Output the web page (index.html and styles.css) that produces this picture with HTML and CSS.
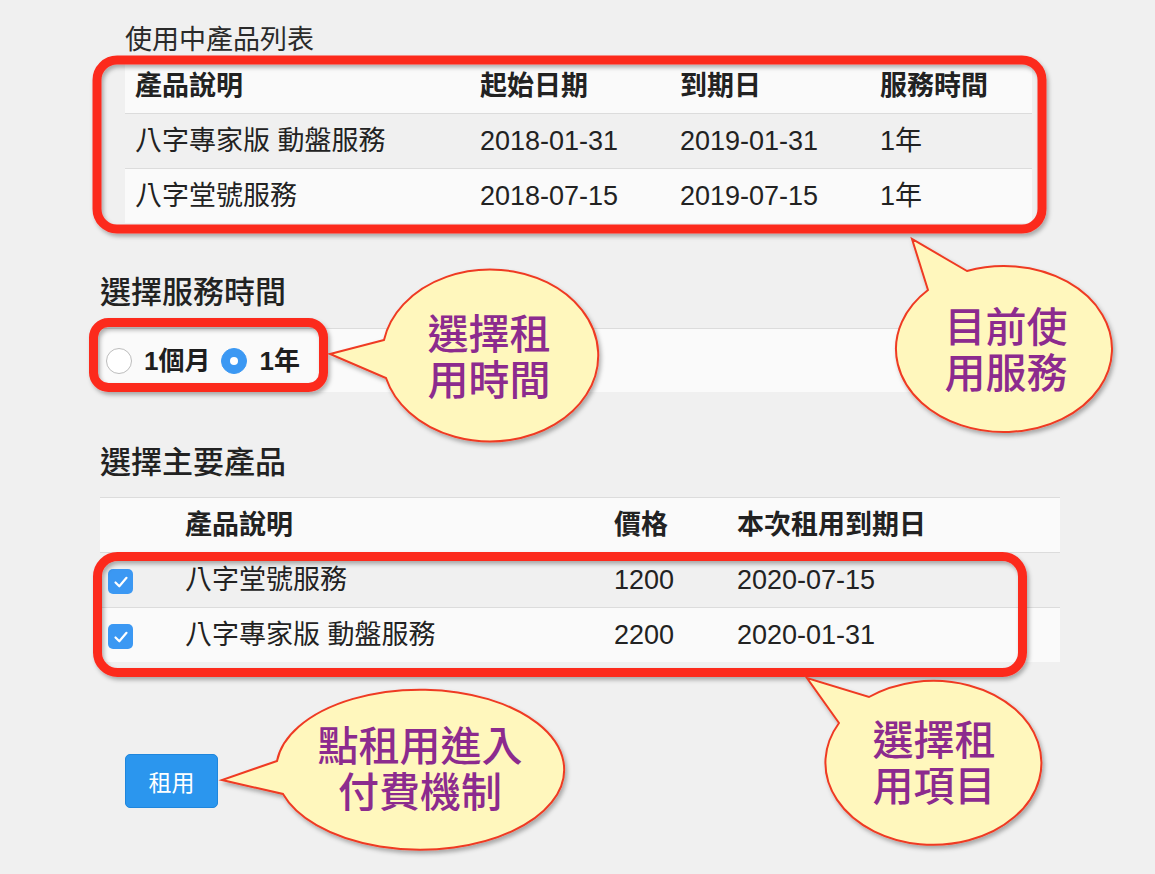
FILE: index.html
```html
<!DOCTYPE html>
<html lang="zh-Hant">
<head>
<meta charset="utf-8">
<title>使用中產品列表</title>
<link rel="stylesheet" href="styles.css">
</head>
<body>
<div class="page">
  <div class="content">
    <section class="current">
      <h2 class="title">使用中產品列表</h2>
      <table class="grid grid-current">
        <colgroup>
          <col class="c-desc"><col class="c-date"><col class="c-date"><col class="c-len">
        </colgroup>
        <thead>
          <tr><th>產品說明</th><th>起始日期</th><th>到期日</th><th>服務時間</th></tr>
        </thead>
        <tbody>
          <tr class="odd"><td>八字專家版 動盤服務</td><td>2018-01-31</td><td>2019-01-31</td><td>1年</td></tr>
          <tr class="even"><td>八字堂號服務</td><td>2018-07-15</td><td>2019-07-15</td><td>1年</td></tr>
        </tbody>
      </table>
    </section>

    <h3 class="heading heading-period">選擇服務時間</h3>
    <div class="period">
      <span class="radio"></span><span class="radio-label">1個月</span>
      <span class="radio checked"></span><span class="radio-label">1年</span>
    </div>

    <h3 class="heading heading-products">選擇主要產品</h3>
    <table class="grid grid-products">
      <colgroup>
        <col class="p-check"><col class="p-desc"><col class="p-price"><col class="p-date">
      </colgroup>
      <thead>
        <tr><th></th><th>產品說明</th><th>價格</th><th>本次租用到期日</th></tr>
      </thead>
      <tbody>
        <tr class="odd">
          <td class="check-cell"><span class="checkbox"><svg viewBox="0 0 24 24" width="24" height="24"><path d="M6.5 12.5 L10.3 16.3 L17.5 7.8" fill="none" stroke="#fff" stroke-width="2.2" stroke-linecap="round" stroke-linejoin="round"/></svg></span></td>
          <td>八字堂號服務</td><td>1200</td><td>2020-07-15</td>
        </tr>
        <tr class="even">
          <td class="check-cell"><span class="checkbox"><svg viewBox="0 0 24 24" width="24" height="24"><path d="M6.5 12.5 L10.3 16.3 L17.5 7.8" fill="none" stroke="#fff" stroke-width="2.2" stroke-linecap="round" stroke-linejoin="round"/></svg></span></td>
          <td>八字專家版 動盤服務</td><td>2200</td><td>2020-01-31</td>
        </tr>
      </tbody>
    </table>

    <button class="rent-btn" type="button">租用</button>
  </div>

  <svg class="annotations" width="1155" height="874" viewBox="0 0 1155 874">
    <defs>
      <filter id="shadow" x="-10%" y="-10%" width="120%" height="130%">
        <feDropShadow dx="2" dy="3" stdDeviation="2.2" flood-color="#000" flood-opacity="0.3"/>
      </filter>
    </defs>
    <g class="frames" filter="url(#shadow)">
      <rect x="97" y="60" width="945" height="169" rx="20" ry="20"/>
      <rect x="93.5" y="322.5" width="230" height="65" rx="15" ry="15"/>
      <rect x="97.5" y="556.5" width="925" height="116" rx="20" ry="20"/>
    </g>
    <g class="bubbles" filter="url(#shadow)">
      <path d="M 928 290 L 912 239 L 967 271 A 108 83 0 1 1 928 290 Z"/>
      <path d="M 384 340 L 330 354 L 386 378 A 108 86 0 1 0 384 340 Z"/>
      <path d="M 839 723 L 807 678 L 869 697 A 108 82 0 1 1 839 723 Z"/>
      <path d="M 277 761 L 222 780 L 283 794 A 144 80 0 1 0 277 761 Z"/>
    </g>
  </svg>

  <div class="callout callout-current">目前使<br>用服務</div>
  <div class="callout callout-period">選擇租<br>用時間</div>
  <div class="callout callout-items">選擇租<br>用項目</div>
  <div class="callout callout-pay">點租用進入<br>付費機制</div>
</div>
</body>
</html>
```

FILE: styles.css
```css
html, body {
  margin: 0;
  padding: 0;
}

body {
  background: #f0f0f0;
  font-family: "Liberation Sans", "Noto Sans CJK TC", sans-serif;
  color: #222;
}

.page {
  position: relative;
  width: 1155px;
  height: 874px;
  overflow: hidden;
}

.content {
  padding: 24px 0 0 100px;
  width: 960px;
}

.current {
  padding-left: 25px;
}

.title {
  margin: 0;
  font-size: 27px;
  line-height: 32px;
  font-weight: 400;
  color: #2a2a2a;
}

.grid {
  border-collapse: collapse;
  table-layout: fixed;
  font-size: 27px;
}

.grid th,
.grid td {
  padding: 11px 10px;
  line-height: 32px;
  border-top: 1px solid #dcdcdc;
  text-align: left;
  white-space: nowrap;
  vertical-align: middle;
}

.grid th {
  font-weight: 700;
}

.grid thead tr {
  background: #fafafa;
}

.grid tr.odd {
  background: #f0f0f0;
}

.grid tr.even {
  background: #fafafa;
}

.grid-current {
  margin-top: 2px;
  width: 907px;
}

.c-desc { width: 345px; }
.c-date { width: 200px; }
.c-len { width: 162px; }

.heading {
  margin: 0;
  font-size: 31px;
  line-height: 36px;
  font-weight: 500;
  color: #222;
}

.heading-period {
  margin-top: 52px;
}

.period {
  margin-top: 17px;
  height: 63px;
  border-top: 1px solid #dcdcdc;
  background: #fafafa;
  display: flex;
  align-items: center;
  padding-left: 6px;
}

.radio {
  width: 24px;
  height: 24px;
  border-radius: 50%;
  border: 1px solid #bdbdbd;
  background: #fff;
  box-sizing: content-box;
  position: relative;
  flex: none;
}

.radio.checked {
  border-color: #3b98f3;
  background: #3b98f3;
}

.radio.checked::after {
  content: "";
  position: absolute;
  left: 8px;
  top: 8px;
  width: 8px;
  height: 8px;
  border-radius: 50%;
  background: #fff;
}

.radio-label {
  font-size: 26px;
  font-weight: 700;
  line-height: 32px;
  margin: 0 11px 0 12px;
  color: #1e1e1e;
}

.heading-products {
  margin-top: 53px;
}

.grid-products {
  margin-top: 16px;
  width: 960px;
}

.p-check { width: 75px; }
.p-desc { width: 429px; }
.p-price { width: 123px; }
.p-date { width: 333px; }

.grid td.check-cell {
  padding-left: 8px;
  padding-right: 0;
}

.checkbox {
  display: inline-flex;
  width: 25px;
  height: 25px;
  border-radius: 5px;
  background: #3b98f3;
  align-items: center;
  justify-content: center;
  vertical-align: middle;
}

.checkbox svg {
  display: block;
}

.rent-btn {
  display: block;
  margin: 92px 0 0 25px;
  width: 93px;
  height: 54px;
  padding: 0;
  border: 1px solid #1f86dc;
  border-radius: 5px;
  background: #2b96ee;
  color: #fff;
  font-family: "Noto Sans CJK TC", sans-serif;
  font-size: 23px;
  font-weight: 400;
}

.annotations {
  position: absolute;
  left: 0;
  top: 0;
  pointer-events: none;
}

.frames rect {
  fill: none;
  stroke: #fc2a1f;
  stroke-width: 9;
}

.bubbles path {
  fill: #fff7bd;
  stroke: #ef3a24;
  stroke-width: 2;
  stroke-linejoin: miter;
}

.callout {
  position: absolute;
  width: 240px;
  font-family: "Liberation Sans", "Noto Sans CJK TC", sans-serif;
  font-size: 41px;
  line-height: 46px;
  font-weight: 500;
  color: #8c2b8e;
  text-align: center;
  white-space: nowrap;
}

.callout-current {
  left: 886px;
  top: 305px;
}

.callout-period {
  left: 369px;
  top: 312px;
}

.callout-items {
  left: 814px;
  top: 718px;
}

.callout-pay {
  left: 300px;
  top: 724px;
}
```
